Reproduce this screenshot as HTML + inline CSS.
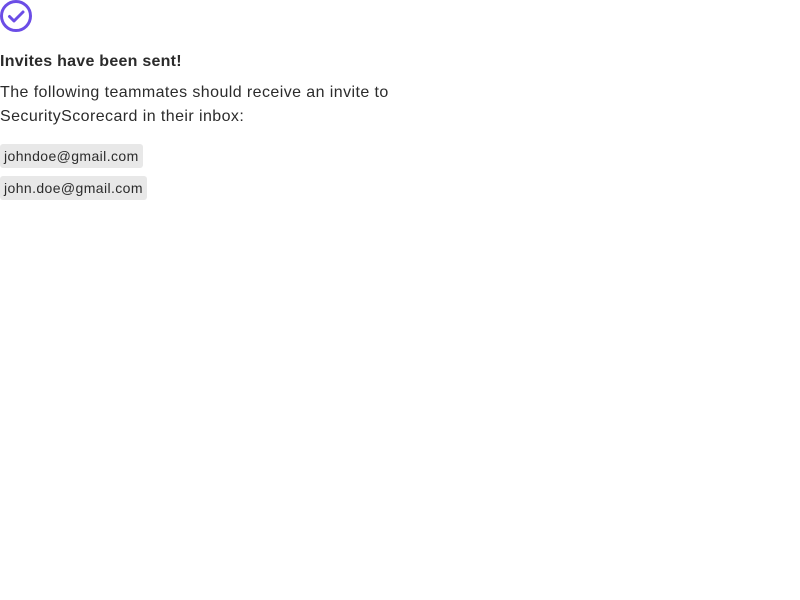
<!DOCTYPE html>
<html><head><style>
body{margin:0;background:#fff;font-family:"Liberation Sans",sans-serif;color:#2b2b2b}
.icon{position:absolute;left:0;top:0}
h1{position:absolute;left:0;top:52px;margin:0;font-size:16px;font-weight:bold;line-height:20px;letter-spacing:0.25px}
p{position:absolute;left:0;top:81px;margin:0;font-size:16px;line-height:24px;width:400px;letter-spacing:0.42px}
.chip{position:absolute;left:0;height:24px;line-height:24px;padding:0 4px;background:#e8e8e8;border-radius:3px;font-size:14px;letter-spacing:0.4px}
</style></head><body>
<svg class="icon" width="32" height="32" viewBox="0 0 32 32"><circle cx="16" cy="16" r="14.5" fill="none" stroke="#6b4de6" stroke-width="3"/><path d="M9.5 16.5l4.5 4.5 9-9" fill="none" stroke="#6b4de6" stroke-width="3" stroke-linecap="round" stroke-linejoin="round"/></svg>
<h1>Invites have been sent!</h1>
<p>The following teammates should receive an invite to SecurityScorecard in their inbox:</p>
<div class="chip" style="top:144px">johndoe@gmail.com</div>
<div class="chip" style="top:176px">john.doe@gmail.com</div>
</body></html>
